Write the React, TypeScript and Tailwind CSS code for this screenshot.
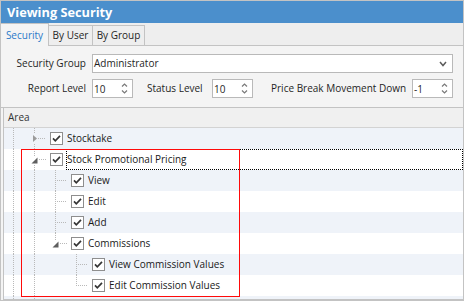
import React from "react";

type CellKind = "full" | "tee" | "elbow" | "empty" | "collapsed" | "expanded" | "expandedLast";

const LINE = "#b9b9b9";

function Cell({ kind }: { kind: CellKind }) {
  const v = (y1: number, y2: number) => (
    <line x1="9.5" y1={y1} x2="9.5" y2={y2} stroke={LINE} strokeWidth="1" strokeDasharray="1 1" shapeRendering="crispEdges" />
  );
  const h = (x1: number) => (
    <line x1={x1} y1="10.5" x2="21" y2="10.5" stroke={LINE} strokeWidth="1" strokeDasharray="1 1" shapeRendering="crispEdges" />
  );
  return (
    <svg width="21" height="21" viewBox="0 0 21 21" className="block shrink-0">
      {kind === "full" && v(0, 21)}
      {kind === "tee" && (
        <>
          {v(0, 21)}
          {h(11)}
        </>
      )}
      {kind === "elbow" && (
        <>
          {v(0, 11)}
          {h(11)}
        </>
      )}
      {kind === "collapsed" && (
        <>
          {v(0, 6)}
          {v(16, 21)}
          <polygon points="8,7 12,10.5 8,14" fill="#9b9b9b" />
          {h(13)}
        </>
      )}
      {kind === "expanded" && (
        <>
          {v(0, 7)}
          {v(16, 21)}
          <polygon points="12.5,8.5 12.5,14.5 6.5,14.5" fill="#5f5f5f" />
          {h(14)}
        </>
      )}
      {kind === "expandedLast" && (
        <>
          {v(0, 7)}
          <polygon points="12.5,8.5 12.5,14.5 6.5,14.5" fill="#5f5f5f" />
          {h(14)}
        </>
      )}
    </svg>
  );
}

function Check() {
  return (
    <svg width="13" height="13" viewBox="0 0 13 13" className="block shrink-0">
      <rect x="0.5" y="0.5" width="12" height="12" fill="#ffffff" stroke="#8e8e8e" />
      <path d="M3 6.4 L5.3 8.8 L10 3.9" fill="none" stroke="#353535" strokeWidth="1.7" />
    </svg>
  );
}

function Spin({ value }: { value: string }) {
  return (
    <div className="w-[41px] h-[19px] bg-white border border-[#b9b9b9] flex items-center shrink-0">
      <span className="flex-1 pl-[1px] text-[10px] leading-none text-[#1f1f1f]">{value}</span>
      <svg width="7" height="13" viewBox="0 0 7 13" className="block mr-[4px]">
        <polyline points="1,4.5 3.5,2 6,4.5" fill="none" stroke="#7a7a7a" strokeWidth="1.2" />
        <polyline points="1,8.5 3.5,11 6,8.5" fill="none" stroke="#7a7a7a" strokeWidth="1.2" />
      </svg>
    </div>
  );
}

const rows: { cells: CellKind[]; label: string; focus?: boolean }[] = [
  { cells: ["full", "collapsed"], label: "Stocktake" },
  { cells: ["full", "expanded"], label: "Stock Promotional Pricing", focus: true },
  { cells: ["full", "full", "tee"], label: "View" },
  { cells: ["full", "full", "tee"], label: "Edit" },
  { cells: ["full", "full", "tee"], label: "Add" },
  { cells: ["full", "full", "expandedLast"], label: "Commissions" },
  { cells: ["full", "full", "empty", "tee"], label: "View Commission Values" },
  { cells: ["full", "full", "empty", "elbow"], label: "Edit Commission Values" },
];

export default function App() {
  return (
    <div className="w-[464px] h-[301px] border border-[#c3c3c3] bg-[#f4f4f4] flex flex-col overflow-hidden relative font-['Open_Sans',sans-serif]">
      {/* Title */}
      <div className="h-[22px] shrink-0 bg-[#4b8fcc] flex items-center pl-[6px]">
        <span className="text-white font-bold text-[12.75px] leading-none">Viewing Security</span>
      </div>

      {/* Tabs */}
      <div className="h-[23px] shrink-0 bg-[#eeeeee] flex items-end">
        <div className="w-[48px] h-[23px] bg-[#f4f4f4] border-t border-r border-[#c3c3c3] flex items-center justify-center text-[10px] text-[#2b79c9]">
          Security
        </div>
        <div className="w-[44px] h-[21px] border-t border-r border-b border-[#c3c3c3] flex items-center justify-center text-[10px] text-[#1f1f1f]">
          By User
        </div>
        <div className="w-[52px] h-[21px] border-t border-r border-b border-[#c3c3c3] flex items-center justify-center text-[10px] text-[#1f1f1f]">
          By Group
        </div>
        <div className="flex-1 self-stretch border-b border-[#c3c3c3]" />
      </div>

      {/* Form */}
      <div className="h-[61px] shrink-0 pt-[8px] flex flex-col gap-[6px] text-[10px] text-[#1f1f1f]">
        <div className="flex items-center pl-[14px]">
          <div className="w-[71px] text-right">Security Group</div>
          <div className="ml-[6px] w-[361px] h-[19px] bg-white border border-[#b9b9b9] flex items-center">
            <span className="flex-1 pl-[1px]">Administrator</span>
            <svg width="8" height="6" viewBox="0 0 8 6" className="block mr-[5px]">
              <polyline points="1,1 4,4.5 7,1" fill="none" stroke="#5c5c5c" strokeWidth="1.5" />
            </svg>
          </div>
        </div>
        <div className="flex items-center pl-[12px]">
          <div className="w-[73px] text-right">Report Level</div>
          <div className="ml-[6px]">
            <Spin value="10" />
          </div>
          <div className="ml-[14px] w-[65px]">Status Level</div>
          <Spin value="10" />
          <div className="ml-[18px] w-[141px]">Price Break Movement Down</div>
          <Spin value="-1" />
        </div>
      </div>

      {/* Grid */}
      <div className="flex-1 min-h-0 border-t border-[#c3c3c3] flex">
        <div className="flex-1 ml-[2px] border-l border-b border-[#c3c3c3] flex flex-col overflow-hidden bg-[#eff3f9]">
          <div className="h-[20px] shrink-0 bg-[#f0f0f0] border-b border-[#d3d3d3] flex items-center pl-[4px] text-[10px] text-[#333]">
            Area
          </div>
          <div className="flex-1 min-h-0 flex flex-col">
            {rows.map((r, i) => (
              <div
                key={i}
                className={`h-[21px] shrink-0 flex items-center text-[10px] text-[#1a1a1a] ${i % 2 === 0 ? "bg-[#eff3f9]" : "bg-white"}`}
              >
                {r.cells.map((c, j) => (
                  <Cell key={j} kind={c} />
                ))}
                <div className="ml-[4px]">
                  <Check />
                </div>
                <div
                  className={`ml-[3px] flex-1 self-stretch flex items-center border ${r.focus ? "border-dotted border-black" : "border-transparent"}`}
                >
                  {r.label}
                </div>
              </div>
            ))}
            <div className="h-[21px] shrink-0 flex bg-[#eff3f9]">
              <Cell kind="full" />
              <Cell kind="full" />
            </div>
          </div>
        </div>
      </div>

      {/* Annotation */}
      <div className="absolute left-[20px] top-[148px] w-[219px] h-[148px] border border-[#ff0a0a] pointer-events-none" />
    </div>
  );
}
